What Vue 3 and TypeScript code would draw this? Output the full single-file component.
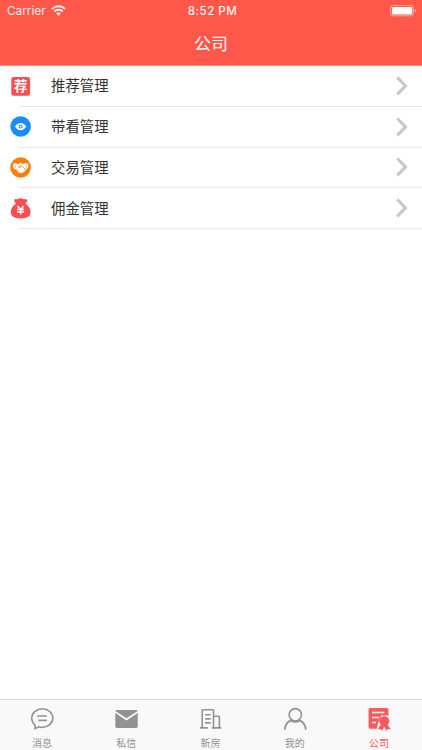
<script setup lang="ts">
import { ref } from 'vue'

type Kind = 'recommend' | 'visit' | 'deal' | 'commission'
type TabKey = 'news' | 'mail' | 'house' | 'mine' | 'company'

const rows: { kind: Kind; label: string }[] = [
  { kind: 'recommend', label: '推荐管理' },
  { kind: 'visit', label: '带看管理' },
  { kind: 'deal', label: '交易管理' },
  { kind: 'commission', label: '佣金管理' },
]
const tabs: { key: TabKey; label: string }[] = [
  { key: 'news', label: '消息' },
  { key: 'mail', label: '私信' },
  { key: 'house', label: '新房' },
  { key: 'mine', label: '我的' },
  { key: 'company', label: '公司' },
]
const active = ref<TabKey>('company')
</script>

<template>
  <div class="screen">
    <header class="header">
      <div class="status">
        <div class="carrier">
          <span>Carrier</span>
          <svg class="wifi" width="15" height="11" viewBox="0 0 15 11">
            <g fill="none" stroke="#fff" stroke-width="2">
              <path d="M.9 4a9.3 9.3 0 0 1 13.2 0" />
              <path d="M3.3 6.5a5.9 5.9 0 0 1 8.4 0" />
            </g>
            <path d="M7.5 10.8 5.1 8.4a3.4 3.4 0 0 1 4.8 0z" fill="#fff" />
          </svg>
        </div>
        <div class="time">8:52 PM</div>
        <div class="power">
          <svg width="27" height="12" viewBox="0 0 27 12">
            <rect x=".6" y=".6" width="23" height="10.2" rx="2.4" fill="none" stroke="#fff" stroke-opacity=".45" />
            <rect x="2" y="1.9" width="20.2" height="7.6" rx="1" fill="#fff" />
            <path d="M24.8 3.9q1.3.5 1.3 1.9t-1.3 1.9z" fill="#fff" fill-opacity=".4" />
          </svg>
        </div>
      </div>
      <h1 class="title">公司</h1>
    </header>

    <main class="list">
      <div v-for="row in rows" :key="row.kind" class="row">
        <svg class="row-icon" width="22" height="22" viewBox="0 0 22 22">
          <template v-if="row.kind === 'recommend'">
            <rect x="1.3" y="1" width="18.8" height="18.8" rx="2.4" fill="#fb4e50" />
            <text x="10.7" y="15.4" class="badge-char">荐</text>
          </template>
          <template v-else-if="row.kind === 'visit'">
            <circle cx="10.6" cy="10.5" r="10.3" fill="#1a8cff" />
            <path d="M4.9 10.6Q7.3 7 10.6 7t5.7 3.6Q13.9 14.2 10.6 14.2T4.9 10.6z" fill="#fff" />
            <circle cx="10.6" cy="10.6" r="2" fill="#1a8cff" />
            <circle cx="10.6" cy="10.6" r="1" fill="#fff" />
          </template>
          <template v-else-if="row.kind === 'deal'">
            <circle cx="10.6" cy="10.5" r="10.3" fill="#fc7d0b" />
            <path d="M3.2 6.6 5.3 6.1 8 7.3 10.5 6.1 13.3 7 15.8 5.9 18.2 6.8V10.9L16.6 12 14.2 14.7 11.4 16.2 8.6 15.5 5.3 12.3 3.2 11z" fill="#fff" />
            <path d="M11.3 7.6 8.2 9.7Q9.4 11.3 11.8 9.3L15.4 12.2" fill="none" stroke="#fc7d0b" stroke-width=".8" />
            <path d="M5 6.8v4.4M16.4 6.7v4.4M6.1 12.9l1.6-1.6M7.6 14.3l1.7-1.7M9.3 15.4l1.3-1.4" fill="none" stroke="#fc7d0b" stroke-width=".5" />
          </template>
          <template v-else>
            <path d="M5.9 5.6 4.2 3.2Q3.8 1.6 5.6 1.1 7.1 1.7 8.2.9 9.4-.2 10.7.3 11.9-.2 13.1.9 14.2 1.7 15.7 1.1 17.7 1.6 17.2 3.2L15.5 5.6Q20.6 9.3 20.6 13.8C20.6 18.5 17.3 20.4 10.7 20.4S.8 18.5.8 13.8Q.8 9.3 5.9 5.6z" fill="#fb4e50" />
            <path d="M7.6 8 10.6 11.5 13.6 8M10.6 11.2V16.6M7.1 11.4h7M7.1 13.9h7" fill="none" stroke="#fff" stroke-width="1.5" />
          </template>
        </svg>
        <div class="cell">
          <span class="label">{{ row.label }}</span>
          <svg class="chevron" width="12" height="20" viewBox="0 0 12 20">
            <path d="M1.2 1.4 9.5 9.9 1.2 18.4" fill="none" stroke="#c8c8c8" stroke-width="3" />
          </svg>
        </div>
      </div>
    </main>

    <nav class="tabs">
      <button v-for="tab in tabs" :key="tab.key" class="tab" :class="{ active: active === tab.key }" @click="active = tab.key">
        <svg width="24" height="24" viewBox="0 0 24 24" fill="none" stroke="currentColor" stroke-width="1.6">
          <template v-if="tab.key === 'news'">
            <path d="M5.1 18.2A9.9 9.3 0 0 1 1.7 11.1C1.7 6 6.4 1.8 12.3 1.8s10.5 4.1 10.5 9.3-4.7 9.3-10.5 9.3q-1.9 0-3.6-.6L5.1 21.7z" />
            <path d="M7 9h9.8M8.2 13.4h8.6" />
          </template>
          <template v-else-if="tab.key === 'mail'">
            <path d="M1.3 4.1Q1.3 2.9 2.5 2.9H22.5Q23.7 2.9 23.7 4.1L12.5 11.2z" fill="currentColor" stroke="none" />
            <path d="M1.3 6 12.5 13.4 23.7 6V19.2Q23.7 21 22.2 21H2.8Q1.3 21 1.3 19.2z" fill="currentColor" stroke="none" />
          </template>
          <template v-else-if="tab.key === 'house'">
            <path d="M3.2 20.6V3.5Q3.2 2.7 4 2.7h9.7q.8 0 .8.8v17.1M14.5 9.2h5q.9 0 .9.9v10.5M1 20.9h7.9M12.8 20.9h9.4" />
            <path d="M6.1 7.7h5.6M6.1 11.9h5.6M6.1 15.9h5.6" />
          </template>
          <template v-else-if="tab.key === 'mine'">
            <circle cx="12.3" cy="7.8" r="6.2" />
            <path d="M1.8 22.6Q2.3 16 7.5 13.4M17.1 13.4Q22.2 16 22.8 22.6M7.5 13.4q4.8 3 9.6 0" stroke-width="1.8" />
          </template>
          <template v-else>
            <rect x="1.6" y=".9" width="19.8" height="20.8" rx="1.7" fill="currentColor" stroke="none" />
            <path d="M5 5.5h12.4M5 10.5h7.2M5 15.5h4" class="paper-line" />
            <path d="M11.2 15.3 9.4 24H24V10.5L20.6 8.6H14.2z" class="cutout" />
            <path d="M17.2 9.1l2 .6 1.9.9.8 1.9.6 1.9-.8 1.9-1.2 1.4 3.3 4.5-2.7-.1-1.5 1.7-2.4-4-2.4 4-1.5-1.7-2.7.1 3.3-4.5-1.2-1.4-.8-1.9.6-1.9.8-1.9 1.9-.9z" fill="currentColor" stroke="none" />
          </template>
        </svg>
        <span>{{ tab.label }}</span>
      </button>
    </nav>
  </div>
</template>

<style>
body {
  margin: 0;
  background: #fff;
}
</style>

<style scoped>
.screen {
  display: flex;
  flex-direction: column;
  height: 750px;
  background: #fff;
  font-family: Inter, "Noto Sans CJK SC", sans-serif;
}
.header {
  box-sizing: border-box;
  height: 66px;
  background: #ff584b;
  border-bottom: 1px solid #ff8c84;
  color: #fff;
}
.status {
  display: grid;
  grid-template-columns: 1fr auto 1fr;
  height: 22px;
  line-height: 22px;
  font-size: 12px;
}
.carrier {
  display: flex;
  align-items: center;
  gap: 5px;
  padding-left: 7px;
  font-size: 11.8px;
  opacity: 0.9;
}
.wifi {
  margin-top: -1px;
}
.time {
  padding-left: 3px;
  font-weight: 500;
  font-size: 11.5px;
  letter-spacing: 0.5px;
  opacity: 0.95;
}
.power {
  display: flex;
  justify-content: flex-end;
  padding: 5px 5px 0 0;
}
.title {
  margin: 0;
  line-height: 42px;
  font-family: "Noto Sans CJK SC", sans-serif;
  font-size: 17px;
  font-weight: 400;
  text-align: center;
}
.list {
  flex: 1;
}
.row {
  display: flex;
  height: 40.75px;
  padding-left: 10px;
}
.row-icon {
  flex: none;
  margin-top: 9.5px;
  z-index: 1;
}
.badge-char {
  fill: #fff;
  font-family: "Noto Sans CJK SC", sans-serif;
  font-size: 13.5px;
  font-weight: 700;
  text-anchor: middle;
}
.cell {
  box-sizing: border-box;
  display: flex;
  flex: 1;
  align-items: center;
  justify-content: space-between;
  margin-left: -12px;
  padding: 0 14px 0 31px;
  border-bottom: 1px solid #e6e6e9;
}
.label {
  padding-top: 1px;
  color: #333;
  font-size: 14.4px;
  line-height: 20px;
}
.tabs {
  box-sizing: border-box;
  display: flex;
  height: 51px;
  padding-right: 1px;
  border-top: 1px solid #d4d4d4;
  background: #f9f9f9;
}
.tab {
  display: flex;
  flex: 1;
  flex-direction: column;
  align-items: center;
  padding: 7px 0 0;
  border: 0;
  background: none;
  color: #929292;
  font: 10px/14px "Noto Sans CJK SC", sans-serif;
}
.tab span {
  margin-top: 5px;
}
.tab.active {
  color: #fa5a5c;
}
.paper-line {
  stroke: #f9f9f9;
  stroke-width: 1.6;
}
.cutout {
  fill: #f9f9f9;
  stroke: none;
}
</style>
